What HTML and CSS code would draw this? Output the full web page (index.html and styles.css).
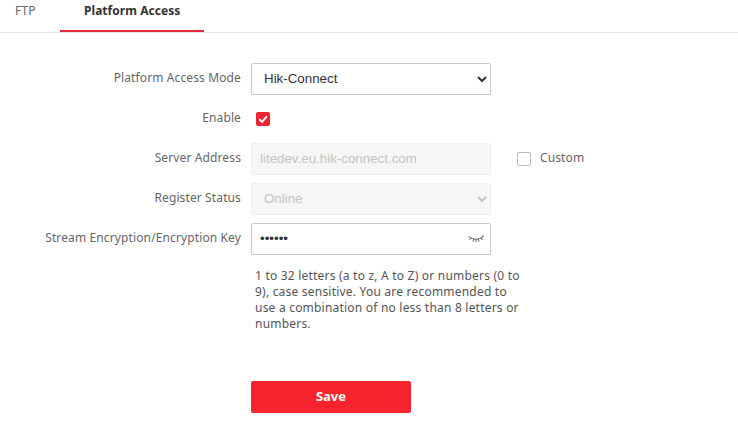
FILE: index.html
```html
<!DOCTYPE html>
<html lang="en">
<head>
<meta charset="utf-8">
<title>Platform Access</title>
<link rel="stylesheet" href="styles.css">
</head>
<body>
<nav class="tabs">
  <a class="tab tab-ftp">FTP</a>
  <a class="tab tab-active">Platform Access</a>
</nav>
<form class="form">
  <div class="row">
    <label class="label">Platform Access Mode</label>
    <select class="control"><option>Hik-Connect</option></select>
  </div>
  <div class="row">
    <label class="label">Enable</label>
    <span class="check check-on">
      <svg viewBox="0 0 14 14" width="14" height="14"><path d="M3.2 7.2 6 9.8 10.9 4.4" fill="none" stroke="#fff" stroke-width="2"/></svg>
    </span>
  </div>
  <div class="row">
    <label class="label">Server Address</label>
    <input class="control control-text" disabled value="litedev.eu.hik-connect.com">
    <span class="check check-off"></span>
    <span class="custom">Custom</span>
  </div>
  <div class="row">
    <label class="label">Register Status</label>
    <select class="control" disabled><option>Online</option></select>
  </div>
  <div class="row">
    <label class="label">Stream Encryption/Encryption Key</label>
    <div class="password">
      <input class="control control-text" type="password" value="123456">
      <svg class="eye" viewBox="0 0 16 10" width="16" height="10"><path d="M.5 1.6C3 3.2 5.5 4.2 8 4.2s5-1 7.5-2.6M3 3 1.4 5M5.7 4 5 6.8M8 4.2V7.4M10.3 4 11 6.8M13 3l1.6 2M13.6 1.6 15.6.4" fill="none" stroke="#555" stroke-width=".9"/></svg>
    </div>
  </div>
  <p class="hint">1 to 32 letters (a to z, A to Z) or numbers (0 to 9), case sensitive. You are recommended to use a combination of no less than 8 letters or numbers.</p>
  <button type="button" class="save">Save</button>
</form>
</body>
</html>
```
FILE: styles.css
```css
* { box-sizing: border-box; }
html, body { margin: 0; padding: 0; background: #fff; overflow: hidden; }
body { width: 738px; height: 431px; font-family: "Noto Sans", "Open Sans", sans-serif; font-size: 12px; letter-spacing: .12px; color: #666; }
.tabs { display: flex; height: 33px; border-bottom: 1px solid #e4e4e4; }
.tab { display: block; height: 32px; line-height: 21px; }
.tab-ftp { width: 60px; padding-left: 15px; color: #666; }
.tab-active { width: 144px; padding-left: 24px; font-weight: 700; letter-spacing: .05px; color: #333; border-bottom: 2px solid #e8283a; }
.form { padding-top: 30px; }
.row { display: flex; align-items: center; height: 32px; margin-bottom: 8px; }
.label { width: 241px; margin-right: 10px; padding-bottom: 3px; text-align: right; color: #666; }
.control { width: 240px; height: 32px; border: 1px solid #c8c8c8; border-radius: 2px; background: #fff; color: #333; font-family: "Liberation Sans", Arial, sans-serif; font-size: 13.33px; letter-spacing: 0; padding: 0 8px 1px; outline: none; }
.control:disabled { background: #f6f6f6; border-color: #eee; color: #c4c4c4; opacity: 1; }
.check { display: block; width: 14px; height: 14px; border-radius: 2px; margin-bottom: 1px; }
.check-on { margin-left: 5px; background: #ee2233; }
.check-on svg { display: block; }
.check-off { margin-left: 26px; border: 1px solid #bbb; }
.custom { margin-left: 9px; padding-bottom: 3px; color: #666; }
.password { position: relative; width: 240px; height: 32px; }
.eye { position: absolute; right: 7px; top: 12px; }
.hint { width: 270px; margin: 13px 0 0 255px; padding: 0; line-height: 16px; letter-spacing: .21px; color: #555; }
.save { display: block; width: 160px; height: 32px; margin: 49px 0 0 251px; border: 0; border-radius: 2px; background: #f7242e; color: #fff; font-family: "Noto Sans", sans-serif; font-size: 13px; font-weight: 700; padding: 0 0 3px; }
```
